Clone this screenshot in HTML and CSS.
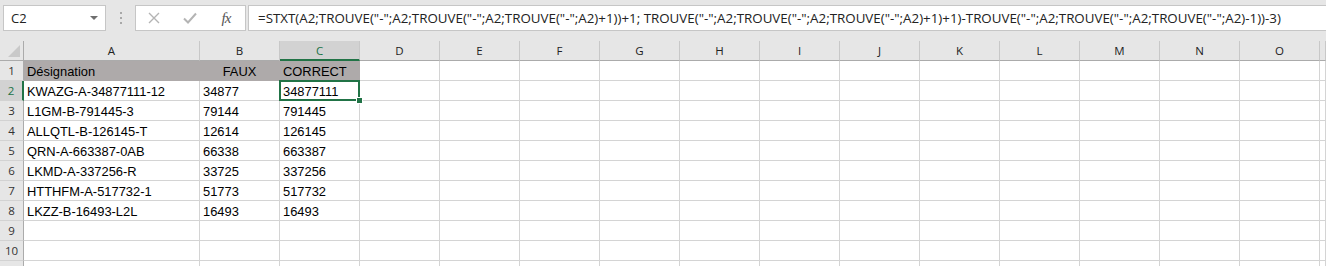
FILE: index.html
```html
<!doctype html>
<html>
<head>
<meta charset="utf-8">
<link rel="stylesheet" href="styles.css">
</head>
<body>
<div class="bar">
	<div class="namebox"><span>C2</span><i class="drop"></i></div>
	<div class="dots"><b></b><b></b><b></b></div>
	<div class="btns">
		<span class="btn"><svg width="12" height="12" viewBox="0 0 12 12"><path d="M1 1L11 11M11 1L1 11" stroke="#b4b4b4" stroke-width="1.4" fill="none"/></svg></span>
		<span class="btn"><svg width="14" height="12" viewBox="0 0 14 12"><path d="M1 6.5L5 10.5L13 1.5" stroke="#b4b4b4" stroke-width="2" fill="none"/></svg></span>
		<span class="btn fx">fx</span>
	</div>
	<div class="formula">=STXT(A2;TROUVE("-";A2;TROUVE("-";A2;TROUVE("-";A2)+1))+1; TROUVE("-";A2;TROUVE("-";A2;TROUVE("-";A2)+1)+1)-TROUVE("-";A2;TROUVE("-";A2;TROUVE("-";A2)-1))-3)</div>
</div>

<div class="sheet">
	<div class="h corner"></div><div class="h">A</div><div class="h">B</div><div class="h on">C</div><div class="h">D</div><div class="h">E</div><div class="h">F</div><div class="h">G</div><div class="h">H</div><div class="h">I</div><div class="h">J</div><div class="h">K</div><div class="h">L</div><div class="h">M</div><div class="h">N</div><div class="h">O</div><div class="h"></div>

	<div class="r">1</div><div class="c fill">Désignation</div><div class="c fill mid">FAUX</div><div class="c fill">CORRECT</div><div class="c"></div><div class="c"></div><div class="c"></div><div class="c"></div><div class="c"></div><div class="c"></div><div class="c"></div><div class="c"></div><div class="c"></div><div class="c"></div><div class="c"></div><div class="c"></div><div class="c"></div>

	<div class="r on">2</div><div class="c">KWAZG-A-34877111-12</div><div class="c">34877</div><div class="c sel">34877111</div><div class="c"></div><div class="c"></div><div class="c"></div><div class="c"></div><div class="c"></div><div class="c"></div><div class="c"></div><div class="c"></div><div class="c"></div><div class="c"></div><div class="c"></div><div class="c"></div><div class="c"></div>

	<div class="r">3</div><div class="c">L1GM-B-791445-3</div><div class="c">79144</div><div class="c">791445</div><div class="c"></div><div class="c"></div><div class="c"></div><div class="c"></div><div class="c"></div><div class="c"></div><div class="c"></div><div class="c"></div><div class="c"></div><div class="c"></div><div class="c"></div><div class="c"></div><div class="c"></div>

	<div class="r">4</div><div class="c">ALLQTL-B-126145-T</div><div class="c">12614</div><div class="c">126145</div><div class="c"></div><div class="c"></div><div class="c"></div><div class="c"></div><div class="c"></div><div class="c"></div><div class="c"></div><div class="c"></div><div class="c"></div><div class="c"></div><div class="c"></div><div class="c"></div><div class="c"></div>

	<div class="r">5</div><div class="c">QRN-A-663387-0AB</div><div class="c">66338</div><div class="c">663387</div><div class="c"></div><div class="c"></div><div class="c"></div><div class="c"></div><div class="c"></div><div class="c"></div><div class="c"></div><div class="c"></div><div class="c"></div><div class="c"></div><div class="c"></div><div class="c"></div><div class="c"></div>

	<div class="r">6</div><div class="c">LKMD-A-337256-R</div><div class="c">33725</div><div class="c">337256</div><div class="c"></div><div class="c"></div><div class="c"></div><div class="c"></div><div class="c"></div><div class="c"></div><div class="c"></div><div class="c"></div><div class="c"></div><div class="c"></div><div class="c"></div><div class="c"></div><div class="c"></div>

	<div class="r">7</div><div class="c">HTTHFM-A-517732-1</div><div class="c">51773</div><div class="c">517732</div><div class="c"></div><div class="c"></div><div class="c"></div><div class="c"></div><div class="c"></div><div class="c"></div><div class="c"></div><div class="c"></div><div class="c"></div><div class="c"></div><div class="c"></div><div class="c"></div><div class="c"></div>

	<div class="r">8</div><div class="c">LKZZ-B-16493-L2L</div><div class="c">16493</div><div class="c">16493</div><div class="c"></div><div class="c"></div><div class="c"></div><div class="c"></div><div class="c"></div><div class="c"></div><div class="c"></div><div class="c"></div><div class="c"></div><div class="c"></div><div class="c"></div><div class="c"></div><div class="c"></div>

	<div class="r">9</div><div class="c"></div><div class="c"></div><div class="c"></div><div class="c"></div><div class="c"></div><div class="c"></div><div class="c"></div><div class="c"></div><div class="c"></div><div class="c"></div><div class="c"></div><div class="c"></div><div class="c"></div><div class="c"></div><div class="c"></div><div class="c"></div>

	<div class="r">10</div><div class="c"></div><div class="c"></div><div class="c"></div><div class="c"></div><div class="c"></div><div class="c"></div><div class="c"></div><div class="c"></div><div class="c"></div><div class="c"></div><div class="c"></div><div class="c"></div><div class="c"></div><div class="c"></div><div class="c"></div><div class="c"></div>

	<div class="r"></div><div class="c"></div><div class="c"></div><div class="c"></div><div class="c"></div><div class="c"></div><div class="c"></div><div class="c"></div><div class="c"></div><div class="c"></div><div class="c"></div><div class="c"></div><div class="c"></div><div class="c"></div><div class="c"></div><div class="c"></div><div class="c"></div>
</div>
</body>
</html>
```

FILE: styles.css
```css
html, body{
	margin:0;
	padding:0;
	overflow:hidden;
	background:#e6e6e6;
}
body{
	width:1326px;
	height:266px;
	font-family:"Liberation Sans", Arial, sans-serif;
}
.bar{
	display:flex;
	align-items:flex-start;
	height:41px;
	box-sizing:border-box;
	padding-top:5px;
	font-family:"Open Sans", "Noto Sans", sans-serif;
}
.namebox{
	position:relative;
	margin-left:3px;
	width:103px;
	height:26px;
	box-sizing:border-box;
	border:1px solid #c6c6c6;
	background:#fff;
	font-size:13px;
	line-height:24px;
	color:#222;
}
.namebox span{
	padding-left:7px;
}
.drop{
	position:absolute;
	right:7px;
	top:10px;
	border-left:4px solid transparent;
	border-right:4px solid transparent;
	border-top:4px solid #6f6f6f;
}
.dots{
	width:29px;
	height:26px;
	display:flex;
	flex-direction:column;
	align-items:center;
	justify-content:center;
	gap:3px;
}
.dots b{
	width:2px;
	height:2px;
	background:#a8a8a8;
}
.btns{
	display:flex;
	width:111px;
	height:26px;
	box-sizing:border-box;
	border:1px solid #c6c6c6;
	background:#fff;
}
.btn{
	width:36px;
	display:flex;
	align-items:center;
	justify-content:center;
}
.fx{
	font-family:"Liberation Serif", serif;
	font-style:italic;
	font-size:15px;
	color:#555;
	letter-spacing:-1px;
}
.formula{
	flex:1;
	margin-left:2px;
	margin-right:-4px;
	height:26px;
	box-sizing:border-box;
	border:1px solid #c6c6c6;
	background:#fff;
	padding-left:9px;
	font-size:13.35px;
	line-height:24px;
	color:#222;
	white-space:nowrap;
	overflow:hidden;
}
.sheet{
	display:grid;
	grid-template-columns:24px 176px repeat(14, 80px) 1fr;
	grid-auto-rows:20px;
	background:#fff;
}
.h{
	box-sizing:border-box;
	background:#e6e6e6;
	border-right:1px solid #c8c8c8;
	border-bottom:1px solid #ababab;
	text-align:center;
	font-family:"Open Sans", "Noto Sans", sans-serif;
	font-size:11.5px;
	line-height:20px;
	color:#222;
}
.h.on{
	background:#d2d2d2;
	color:#217346;
	border-bottom:2px solid #217346;
}
.corner{
	position:relative;
	border-right-color:#ababab;
}
.corner::after{
	content:"";
	position:absolute;
	right:3px;
	bottom:3px;
	border-left:12px solid transparent;
	border-bottom:12px solid #c9c9c9;
}
.r{
	box-sizing:border-box;
	background:#e6e6e6;
	border-right:1px solid #ababab;
	border-bottom:1px solid #d2d2d2;
	text-align:center;
	font-family:"Open Sans", "Noto Sans", sans-serif;
	font-size:11.5px;
	line-height:20px;
	color:#333;
}
.r.on{
	background:#d2d2d2;
	color:#217346;
	border-right:2px solid #217346;
}
.c{
	box-sizing:border-box;
	border-right:1px solid #d4d4d4;
	border-bottom:1px solid #d4d4d4;
	padding:2px 0 0 3px;
	font-size:12.9px;
	line-height:17px;
	color:#000;
	white-space:nowrap;
	overflow:hidden;
}
.fill{
	background:#aeaaaa;
	border-color:#aeaaaa;
}
.mid{
	text-align:center;
	padding-left:0;
}
.sel{
	position:relative;
	overflow:visible;
}
.sel::after{
	content:"";
	position:absolute;
	left:-1px;
	top:-1px;
	right:-1px;
	bottom:-1px;
	border:2px solid #217346;
}
.sel::before{
	content:"";
	position:absolute;
	right:-4px;
	bottom:-4px;
	width:5px;
	height:5px;
	background:#217346;
	border:1px solid #fff;
	z-index:1;
}
```
